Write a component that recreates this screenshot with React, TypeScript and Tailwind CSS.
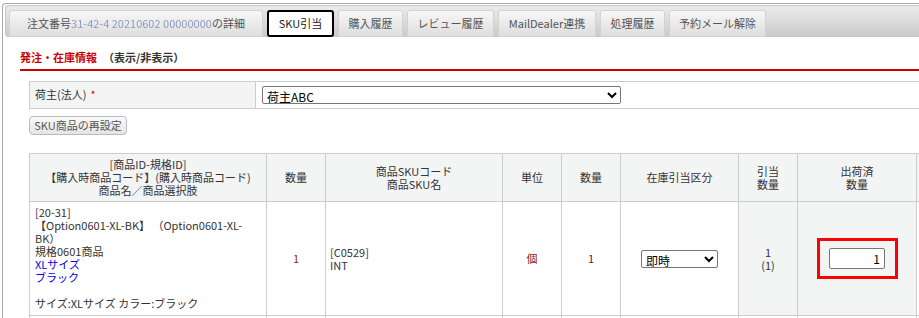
const TABS = [
  { label: "購入履歴", w: "w-[65px]" },
  { label: "レビュー履歴", w: "w-[87px]" },
  { label: "MailDealer連携", w: "w-[98px]" },
  { label: "処理履歴", w: "w-[65px]" },
  { label: "予約メール解除", w: "w-[97px]" },
];

const tabBase =
  "-mb-px flex h-[27px] items-center justify-center rounded-t-[3px] border border-[#d3d3d3] bg-gradient-to-b from-[#f7f7f7] to-[#dedede] text-[#555555]";

const th = "border border-[#cccccc] bg-[#f3f4f4] px-[4px] text-center align-middle font-normal";
const td = "border border-[#cccccc] px-[4px] text-center align-middle";

export default function App() {
  return (
    <div className="h-[318px] w-[919px] overflow-hidden bg-white font-['Noto_Sans_CJK_JP','Noto_Sans',sans-serif] text-[11px] leading-[13px] text-[#333333]">
      {/* outer tab frame */}
      <div className="ml-[2px] mt-[3px] h-[400px] w-[1000px] rounded-tl-[4px] border-l border-t border-[#aaaaaa] pl-[2px] pt-[1px]">
        {/* tab strip */}
        <div className="flex h-[32px] items-end gap-[4px] rounded-[3px] border border-[#c5c5c5] bg-gradient-to-b from-[#ebebeb] to-[#cbcbcb] pl-[3px]">
          <div className={`${tabBase} w-[254px]`}>
            注文番号
            <span className="inline-block blur-[0.4px] text-[#8c9cc0]">31-42-4 20210602 00000000</span>
            の詳細
          </div>
          <div className="-mb-px flex h-[27px] w-[67px] items-center justify-center rounded-[3px] border-2 border-black bg-white text-[#212121]">
            SKU引当
          </div>
          {TABS.map((t) => (
            <div key={t.label} className={`${tabBase} ${t.w}`}>
              {t.label}
            </div>
          ))}
        </div>

        {/* panel */}
        <div className="pl-[15px]">
          <div className="border-b-2 border-[#cc0000] pb-[5px] pt-[14px] font-bold">
            <span className="text-[#cc0000]">発注・在庫情報</span>
            <span className="ml-[6px] text-[#333333]">（表示/非表示）</span>
          </div>

          <div className="ml-[9px]">
            {/* shipper row */}
            <div className="mt-[10px] flex h-[28px] border-y border-[#cccccc]">
              <div className="flex w-[227px] items-center border-x border-[#cccccc] bg-[#f3f4f4] pl-[5px] pb-[1px]">
                荷主(法人)<span className="ml-[4px] text-[#ee0000]">*</span>
              </div>
              <div className="flex flex-1 items-center pl-[6px]">
                <select className="h-[18px] w-[359px] rounded-[2px] border border-[#767676] bg-white text-[12px] leading-[14px] text-black">
                  <option>荷主ABC</option>
                </select>
              </div>
            </div>

            <button className="mt-[7px] h-[19px] w-[98px] rounded-[4px] border border-[#bbbbbb] bg-gradient-to-b from-[#fbfbfb] to-[#e4e4e4] text-[11px] leading-[13px] text-[#555555]">
              SKU商品の再設定
            </button>

            {/* SKU table */}
            <table className="mt-[18px] w-[987px] table-fixed border-collapse">
              <colgroup>
                <col className="w-[237px]" />
                <col className="w-[59px]" />
                <col className="w-[177px]" />
                <col className="w-[59px]" />
                <col className="w-[59px]" />
                <col className="w-[118px]" />
                <col className="w-[59px]" />
                <col className="w-[119px]" />
                <col className="w-[100px]" />
              </colgroup>
              <thead>
                <tr className="h-[48px]">
                  <th className={th}>
                    [商品ID-規格ID]
                    <br />
                    【購入時商品コード】(購入時商品コード)
                    <br />
                    商品名／商品選択肢
                  </th>
                  <th className={th}>数量</th>
                  <th className={th}>
                    商品SKUコード
                    <br />
                    商品SKU名
                  </th>
                  <th className={th}>単位</th>
                  <th className={th}>数量</th>
                  <th className={th}>在庫引当区分</th>
                  <th className={th}>
                    引当
                    <br />
                    数量
                  </th>
                  <th className={th}>
                    出荷済
                    <br />
                    数量
                  </th>
                  <th className={th}></th>
                </tr>
              </thead>
              <tbody>
                <tr className="h-[113px]">
                  <td className="border border-[#cccccc] px-[5px] pb-[5px] pt-[4px] text-left align-top">
                    [20-31]
                    <br />
                    【Option0601-XL-BK】 （Option0601-XL-
                    <br />
                    BK）
                    <br />
                    規格0601商品
                    <br />
                    <span className="text-[#0000ee]">XLサイズ</span>
                    <br />
                    <span className="text-[#0000ee]">ブラック</span>
                    <br />
                    <br />
                    サイズ:XLサイズ カラー:ブラック
                  </td>
                  <td className={`${td} text-[#8b1c1c]`}>1</td>
                  <td className={`${td} text-left`}>
                    [C0529]
                    <br />
                    INT
                  </td>
                  <td className={`${td} text-[#8b1c1c]`}>個</td>
                  <td className={td}>1</td>
                  <td className={td}>
                    <select className="h-[18px] w-[77px] rounded-[2px] border border-[#767676] bg-white text-[12px] leading-[14px] text-black">
                      <option>即時</option>
                    </select>
                  </td>
                  <td className={`${td} bg-[#f3f4f4]`}>
                    1
                    <br />
                    (1)
                  </td>
                  <td className={`${td} bg-[#f3f4f4]`}>
                    <div className="mx-auto flex h-[41px] w-[81px] items-center justify-center border-[3px] border-[#ff0000]">
                      <input
                        readOnly
                        value="1"
                        className="h-[21px] w-[56px] rounded-[2px] border border-[#767676] bg-white pr-[4px] text-right text-[12px] text-black"
                      />
                    </div>
                  </td>
                  <td className={td}></td>
                </tr>
                <tr className="h-[40px]">
                  <td className={td}></td>
                  <td className={td}></td>
                  <td className={td}></td>
                  <td className={td}></td>
                  <td className={td}></td>
                  <td className={td}></td>
                  <td className={td}></td>
                  <td className={td}></td>
                  <td className={td}></td>
                </tr>
              </tbody>
            </table>
          </div>
        </div>
      </div>
    </div>
  );
}
